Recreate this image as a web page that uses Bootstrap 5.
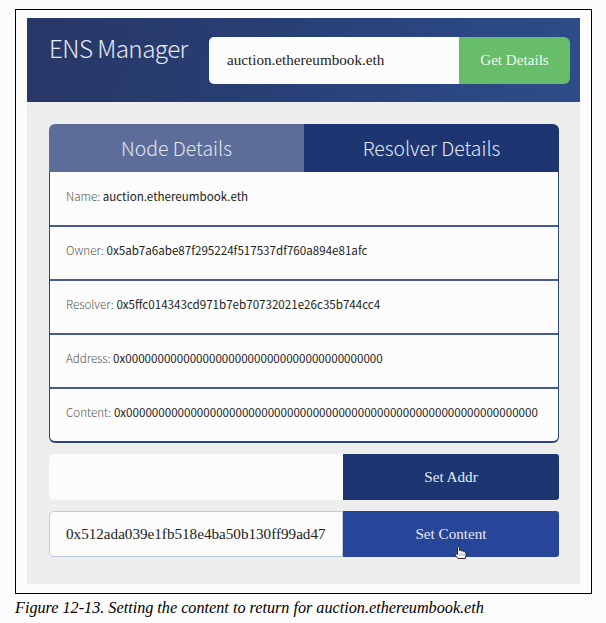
<!DOCTYPE html>
<html lang="en">
<head>
<meta charset="utf-8">
<title>ENS Manager</title>
<link href="https://cdn.jsdelivr.net/npm/bootstrap@5.3.0/dist/css/bootstrap.min.css" rel="stylesheet">
<style>
body{background:#fcfcfc;width:606px;height:623px;overflow:hidden;color:#000}
.frame{margin:9px 14px 0 15px;height:585px;border:1px solid #000;padding:8px 11px 9px}
.panel{background:#eee;height:566px}
.ens,.detail-tabs,.details{font-family:"Noto Sans CJK SC",sans-serif}
.top{height:84px;padding:19px 10px 0 22px;background:linear-gradient(100deg,#273767,#283d70 35%,#29437c 60%,#2d4d89)}
.ens{font-size:24.3px;letter-spacing:-.6px;font-weight:300;line-height:22px;color:#e4e9f4;width:160px;white-space:nowrap}
.serif{font-family:"Liberation Serif",serif;font-size:15.15px;line-height:20px}
.search{height:47px}
.search .form-control,.pair .form-control{border:0;border-radius:5px 0 0 5px;background:#fcfcfc;color:#222;padding:0 17px 1px}
.search .form-control{padding-left:18px}
.search .btn{width:111px;border:0;border-radius:0 6px 6px 0;background:#67bd6a;color:#eef8ee;padding:0 0 1px}
.main-area{padding:22px 21px 0 22px}
.detail-tabs{height:48px;border-radius:6px 6px 0 0;overflow:hidden;font-size:19.4px;font-weight:300;color:#e0e6f2}
.detail-tabs>div{height:48px;line-height:48px;text-align:center}
.t1{background:#5d6d99}.t2{background:#1d3672}
.details{border:1px solid #2d4683;border-bottom-width:2px;border-top:0;border-radius:0 0 6px 6px;background:#fcfcfc;overflow:hidden}
.details>.list-group-item{height:54px;border:0;border-bottom:2px solid #455c93;border-radius:0;padding:13px 0 0 16px;line-height:20px;font-size:11.6px;background:transparent;color:#222;white-space:nowrap}
.details>.list-group-item:first-child{height:55px;padding-top:14px}
.details>.list-group-item:last-child{height:52px;border-bottom:0}
.details span{color:#555;font-weight:300}
.pair{height:46px;margin-top:11px}
.pair .form-control{flex:0 0 294px}
.pair .form-control.active-field{border:1px solid #bfccdc;padding:0 15px 1px 16px}
.pair .btn{border:0;border-radius:0 3px 3px 0;color:#e6ebf5;background:#1d3672;padding:0 0 1px}
.pair .btn.hot{background:#27469a}
.pointer{position:absolute;left:110px;top:34px}
.cap{margin:4px 0 0 15px;font:italic 16.2px/20px "Liberation Serif",serif;white-space:nowrap}
</style>
</head>
<body>
<figure class="mb-0">
<div class="frame">
<div class="panel">
<header class="top d-flex">
<h1 class="ens mb-0">ENS Manager</h1>
<div class="search input-group flex-nowrap flex-grow-1 w-auto">
<input class="form-control serif" value="auction.ethereumbook.eth" aria-label="Name">
<button class="btn serif">Get Details</button>
</div>
</header>
<main class="main-area">
<div class="detail-tabs d-flex"><div class="t1 w-50">Node Details</div><div class="t2 w-50">Resolver Details</div></div>
<ul class="details list-group list-group-flush mb-0">
<li class="list-group-item"><span>Name:</span> <b class="fw-normal">auction.ethereumbook.eth</b></li>
<li class="list-group-item"><span>Owner:</span> <b class="fw-normal">0x5ab7a6abe87f295224f517537df760a894e81afc</b></li>
<li class="list-group-item"><span>Resolver:</span> <b class="fw-normal">0x5ffc014343cd971b7eb70732021e26c35b744cc4</b></li>
<li class="list-group-item"><span>Address:</span> <b class="fw-normal">0x0000000000000000000000000000000000000000</b></li>
<li class="list-group-item"><span>Content:</span> <b class="fw-normal">0x0000000000000000000000000000000000000000000000000000000000000000</b></li>
</ul>
<div class="pair d-flex"><input class="form-control serif" aria-label="Address"><button class="btn serif flex-grow-1">Set Addr</button></div>
<div class="pair d-flex"><input class="form-control serif active-field" value="0x512ada039e1fb518e4ba50b130ff99ad47" aria-label="Content"><button class="btn serif flex-grow-1 hot position-relative">Set Content
<svg class="pointer" width="16" height="16" viewBox="0 0 16 16" aria-hidden="true"><path d="M4.500 9.500V2.500Q5.500 1 6.500 2.500V5.500Q8 4.500 8.700 6Q10.200 5.200 10.800 6.700Q12.800 6.200 13 8V11L12.200 13.500H5L2 10Q2.500 7.500 4.500 9.500Z" fill="#f6f6f6" stroke="#222"/><path d="M7 8v3M9 8v3M11 8.500v2.500" stroke="#999" stroke-width=".7"/></svg></button></div>
</main>
</div>
</div>
<figcaption class="cap">Figure 12-13. Setting the content to return for auction.ethereumbook.eth</figcaption>
</figure>
<script src="https://cdn.jsdelivr.net/npm/bootstrap@5.3.0/dist/js/bootstrap.bundle.min.js"></script>
</body>
</html>
